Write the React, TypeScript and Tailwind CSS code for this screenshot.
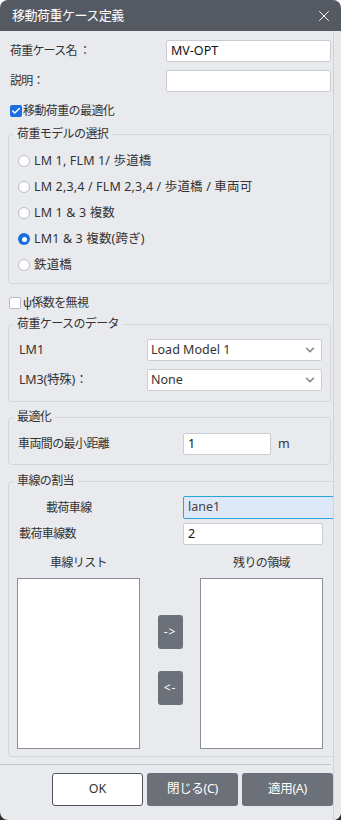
import { X, ChevronDown, Check } from 'lucide-react';

const models = [
  { label: 'LM 1, FLM 1/ 歩道橋', selected: false },
  { label: 'LM 2,3,4 / FLM 2,3,4 / 歩道橋 / 車両可', selected: false },
  { label: 'LM 1 & 3 複数', selected: false },
  { label: 'LM1 & 3 複数(跨ぎ)', selected: true },
  { label: '鉄道橋', selected: false },
];

function Radio({ selected }: { selected: boolean }) {
  return selected ? (
    <span className="w-[12px] h-[12px] rounded-full bg-[#1a6fe0] flex items-center justify-center shrink-0">
      <span className="w-[5px] h-[5px] rounded-full bg-white" />
    </span>
  ) : (
    <span className="w-[12px] h-[12px] rounded-full bg-white border border-[#b9bcc2] shrink-0" />
  );
}

function Select({ value }: { value: string }) {
  return (
    <div className="w-[175px] h-[22px] bg-white border border-[#c9ccd1] rounded-[2px] flex items-center justify-between pl-[3px] pr-[4px]">
      <span className="text-[12.5px] text-[#333]">{value}</span>
      <ChevronDown className="w-[14px] h-[14px] text-[#80848b]" strokeWidth={2.6} />
    </div>
  );
}

export default function App() {
  return (
    <div className="w-[341px] h-[820px] bg-[linear-gradient(to_bottom,white_50%,#2b2b2b_50%)] font-['Noto_Sans','Noto_Sans_CJK_JP',sans-serif] text-[12px] text-[#333]">
      <div className="h-full rounded-[8px] overflow-hidden bg-[#e9eaee] flex flex-col">
        {/* Title bar */}
        <div className="h-[31px] shrink-0 bg-[#555a62] flex items-center justify-between pl-[12px] pr-[8px] text-white">
          <span className="text-[13px] tracking-[-0.5px]">移動荷重ケース定義</span>
          <X className="w-[18px] h-[18px]" strokeWidth={1.3} />
        </div>

        <div className="flex flex-1">
          <div className="w-[333px] overflow-hidden flex flex-col">
            {/* Name */}
            <div className="mt-[9px] flex items-center justify-between pl-[10px] pr-[2px]">
              <span className="tracking-[-0.8px]">荷重ケース名 ：</span>
              <div className="w-[165px] h-[22px] bg-white border border-[#c9ccd1] rounded-[2px] flex items-center pl-[4px] text-[12.5px] text-[#111]">
                MV-OPT
              </div>
            </div>
            <div className="mt-[8px] flex items-center justify-between pl-[10px] pr-[2px]">
              <span className="tracking-[-0.8px]">説明：</span>
              <div className="w-[165px] h-[22px] bg-white border border-[#c9ccd1] rounded-[2px]" />
            </div>

            {/* Optimise checkbox */}
            <div className="mt-[12px] h-[14px] flex items-center gap-[1px] pl-[10px]">
              <span className="w-[12px] h-[12px] rounded-[2px] bg-[#1a6fe0] flex items-center justify-center">
                <Check className="w-[10px] h-[10px] text-white" strokeWidth={3.5} />
              </span>
              <span className="tracking-[-0.6px]">移動荷重の最適化</span>
            </div>

            {/* Load model */}
            <fieldset className="mt-[9px] ml-[8px] w-[323px] border border-[#d3d5da] rounded-[4px] pl-[9px] pt-[7px] pb-[5px]">
              <legend className="-ml-[5px] px-[4px] leading-[14px] tracking-[-0.6px]">荷重モデルの選択</legend>
              {models.map((m) => (
                <div key={m.label} className="h-[26px] flex items-center gap-[4px]">
                  <Radio selected={m.selected} />
                  <span className="text-[12.5px] tracking-[0.15px]">{m.label}</span>
                </div>
              ))}
            </fieldset>

            {/* Psi */}
            <div className="mt-[12px] h-[14px] flex items-center gap-[2px] pl-[9px]">
              <span className="w-[12px] h-[12px] rounded-[2px] bg-white border border-[#b9bcc2]" />
              <span className="tracking-[-0.6px]">ψ係数を無視</span>
            </div>

            {/* Load case data */}
            <fieldset className="mt-[7px] ml-[8px] w-[323px] border border-[#d3d5da] rounded-[4px] pl-[10px] pr-[8px] pt-[8px] pb-[10px]">
              <legend className="-ml-[6px] px-[4px] leading-[14px] tracking-[-0.6px]">荷重ケースのデータ</legend>
              <div className="flex items-center justify-between">
                <span className="text-[12.5px]">LM1</span>
                <Select value="Load Model 1" />
              </div>
              <div className="mt-[8px] flex items-center justify-between">
                <span className="text-[12.5px] tracking-[-0.2px]">LM3(特殊)：</span>
                <Select value="None" />
              </div>
            </fieldset>

            {/* Optimisation */}
            <fieldset className="mt-[8px] ml-[8px] w-[323px] border border-[#d3d5da] rounded-[4px] pl-[9px] pt-[9px] pb-[9px]">
              <legend className="-ml-[5px] px-[4px] leading-[14px] tracking-[-0.6px]">最適化</legend>
              <div className="flex items-center">
                <span className="w-[165px] tracking-[-0.6px]">車両間の最小距離</span>
                <div className="w-[88px] h-[22px] bg-white border border-[#c9ccd1] rounded-[2px] flex items-center pl-[4px] text-[12.5px] text-[#111]">
                  1
                </div>
                <span className="ml-[7px] text-[12.5px]">m</span>
              </div>
            </fieldset>

            {/* Lane assignment */}
            <fieldset className="mt-[9px] ml-[8px] w-[323px] border border-[#d3d5da] rounded-[4px] pt-[8px] pb-[7px]">
              <legend className="ml-[4px] px-[4px] leading-[14px] tracking-[-0.6px]">車線の割当</legend>
              <div className="flex items-center">
                <span className="w-[174px] pl-[37px] tracking-[-0.6px]">載荷車線</span>
                <div className="w-[160px] shrink-0 h-[23px] bg-[#dde8f8] border border-[#2aa4dc] rounded-l-[2px] flex items-center pl-[4px] text-[12.5px] text-[#444]">
                  lane1
                </div>
              </div>
              <div className="mt-[4px] flex items-center">
                <span className="w-[174px] pl-[10px] tracking-[-0.6px]">載荷車線数</span>
                <div className="w-[140px] h-[22px] bg-white border border-[#c9ccd1] rounded-[2px] flex items-center pl-[4px] text-[12.5px] text-[#111]">
                  2
                </div>
              </div>
              <div className="mt-[10px] h-[16px] flex items-center pl-[8px]">
                <span className="w-[123px] text-center tracking-[-0.6px]">車線リスト</span>
                <span className="ml-[60px] w-[123px] text-center tracking-[-0.6px]">残りの領域</span>
              </div>
              <div className="mt-[7px] flex pl-[8px]">
                <div className="w-[123px] h-[171px] bg-white border border-[#8b8e94]" />
                <div className="w-[60px] flex flex-col items-center justify-center gap-[22px] pb-[8px]">
                  <div className="w-[25px] h-[34px] rounded-[3px] bg-[#6b7079] text-white text-[12px] tracking-[1px] flex items-center justify-center">-&gt;</div>
                  <div className="w-[25px] h-[34px] rounded-[3px] bg-[#6b7079] text-white text-[12px] tracking-[1px] flex items-center justify-center">&lt;-</div>
                </div>
                <div className="w-[123px] h-[171px] bg-white border border-[#8b8e94]" />
              </div>
            </fieldset>

            <div className="mt-[7px] w-[331px] h-px bg-[#c4c7cc]" />

            {/* Footer buttons */}
            <div className="mt-[8px] flex gap-[4px] pl-[52px]">
              <button className="w-[91px] h-[33px] bg-white border border-[#50555d] rounded-[3px] text-[12.5px] text-[#333]">OK</button>
              <button className="w-[91px] h-[33px] bg-[#6b7079] rounded-[3px] text-[12.5px] text-white tracking-[-0.3px]">閉じる(C)</button>
              <button className="w-[91px] h-[33px] bg-[#6b7079] rounded-[3px] text-[12.5px] text-white tracking-[-0.3px]">適用(A)</button>
            </div>
          </div>
          <div className="flex-1 border-l border-[#cfd1d5] bg-[#e7e8eb]" />
        </div>
      </div>
    </div>
  );
}
